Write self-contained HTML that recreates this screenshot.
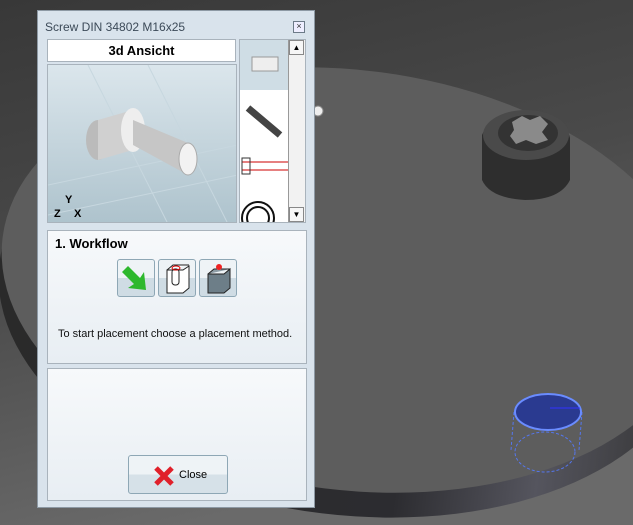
<!DOCTYPE html>
<html><head><style>
html,body{margin:0;width:633px;height:525px;overflow:hidden}
body{position:relative;font-family:"Liberation Sans",Tahoma,sans-serif;background:#3a3a3a}
.bg{position:absolute;left:0;top:0;display:block}
.dlg{position:absolute;left:37px;top:10px;width:278px;height:498px;background:#d9e3ec;border:1px solid #8d99a4;box-sizing:border-box}
.title{position:absolute;left:7px;top:9px;font-size:12px;color:#3c4a58}
.xbtn{position:absolute;left:255px;top:10px;width:10px;height:10px;border:1px solid #6c7a88;font-size:9px;line-height:9px;text-align:center;color:#333;background:#eef}
.hdr{position:absolute;left:9px;top:28px;width:189px;height:23px;background:#fff;border:1px solid #a9b3bc;box-sizing:border-box;font-weight:bold;font-size:13px;text-align:center;line-height:21px}
.img{position:absolute;left:9px;top:53px;width:190px;height:159px;background:linear-gradient(180deg,#dbe6ec,#aec3cd);border:1px solid #a9b3bc;box-sizing:border-box;overflow:hidden}
.thumbs{position:absolute;left:201px;top:28px;width:67px;height:184px;background:#fff;border:1px solid #a9b3bc;box-sizing:border-box;overflow:hidden}
.sb{position:absolute;right:0;top:0;width:16px;height:182px;background:#f2f2f2;border-left:1px solid #999}
.sbb{position:absolute;left:0;width:15px;height:15px;background:#f6f6f6;border:1px solid #888;box-sizing:border-box;font-size:8px;text-align:center;line-height:13px}
.pan{position:absolute;left:9px;width:260px;background:linear-gradient(180deg,#f7f9fb,#e8eef3);border:1px solid #a9b3bc;box-sizing:border-box}
.wf{font-weight:bold;font-size:13px;position:absolute;left:7px;top:5px}
.ib{position:absolute;top:28px;width:38px;height:38px;border:1px solid #8ea7b5;border-radius:3px;box-sizing:border-box;background:linear-gradient(180deg,#eef3f6 50%,#cfdce4 50%)}
.msg{position:absolute;left:10px;top:97px;font-size:11px;color:#111}
.close{position:absolute;left:80px;top:86px;width:100px;height:39px;border:1px solid #8ea7b5;border-radius:3px;box-sizing:border-box;background:linear-gradient(180deg,#eef3f6 50%,#d6e1e8 50%);font-size:11px}
</style></head><body>
<svg class="bg" width="633" height="525">
<defs>
<linearGradient id="fl" x1="0" y1="0" x2="0.3" y2="1"><stop offset="0" stop-color="#383838"/><stop offset="0.5" stop-color="#4a4a4a"/><stop offset="1" stop-color="#6a6a6a"/></linearGradient>
<linearGradient id="rim" x1="0" y1="0" x2="1" y2="0"><stop offset="0" stop-color="#2a2a2a"/><stop offset="0.6" stop-color="#2c2c30"/><stop offset="0.8" stop-color="#55555e"/><stop offset="1" stop-color="#333"/></linearGradient>
</defs>
<rect width="633" height="525" fill="url(#fl)"/>
<g transform="rotate(7 350 280)">
<ellipse cx="350" cy="305" rx="350" ry="210" fill="url(#rim)"/>
<ellipse cx="350" cy="280" rx="350" ry="210" fill="#5d5d5d"/>
</g>
<path d="M482 135 Q490 115 525 112 Q565 115 570 138 L570 180 Q560 200 525 200 Q490 198 482 180Z" fill="#2e2e2e"/>
<ellipse cx="526" cy="135" rx="43" ry="25" fill="#4a4a4a"/>
<ellipse cx="528" cy="133" rx="30" ry="18" fill="#333"/>
<path d="M512 122 l10 -6 8 4 10 -4 8 8 -6 8 6 8 -12 4 -10 -4 -10 4 -6 -8 4 -6z" fill="#8a8a8a"/>
<circle cx="318" cy="111" r="5" fill="#eee" stroke="#888"/>
<ellipse cx="545" cy="452" rx="30" ry="20" fill="none" stroke="#5577ee" stroke-width="1" stroke-dasharray="3 2"/>
<path d="M514 412 L511 450 M582 412 L579 450" stroke="#5577ee" stroke-width="1" stroke-dasharray="3 2"/>
<ellipse cx="548" cy="412" rx="33" ry="18" fill="#2a3a90" stroke="#6a8cff" stroke-width="2"/>
<path d="M550 408 H580" stroke="#33f" stroke-width="1"/>
</svg>
<div class="dlg">
<div class="title">Screw DIN 34802 M16x25</div>
<div class="xbtn">×</div>
<div class="hdr">3d Ansicht</div>
<div class="img"><svg width="190" height="159">
<path d="M0 120 L190 80 M0 150 L190 110 M40 0 L120 159 M100 0 L180 159" stroke="#c7d7df" stroke-width="1"/>
<ellipse cx="50" cy="75" rx="12" ry="20" fill="#bbb"/>
<path d="M50 55 L85 45 L85 85 L50 95Z" fill="#d0d0d0"/>
<ellipse cx="85" cy="65" rx="12" ry="22" fill="#eee"/>
<path d="M85 55 L140 78 L140 110 L85 80Z" fill="#c6c6c6"/>
<ellipse cx="140" cy="94" rx="9" ry="16" fill="#f2f2f2" stroke="#aaa"/>
<text x="17" y="138" font-size="11" font-weight="bold" font-family="Liberation Sans">Y</text>
<text x="6" y="152" font-size="11" font-weight="bold" font-family="Liberation Sans">Z</text>
<text x="26" y="152" font-size="11" font-weight="bold" font-family="Liberation Sans">X</text>
</svg></div>
<div class="thumbs">
<div style="position:absolute;left:0;top:0;width:50px;height:50px;background:#cfdde5"></div>
<svg style="position:absolute;left:0;top:0" width="50" height="184">
<rect x="12" y="17" width="26" height="14" fill="#eee" stroke="#999"/>
<path d="M8 68 L40 95" stroke="#444" stroke-width="7"/>
<path d="M2 122 H48 M2 130 H48" stroke="#c00" stroke-width="1"/><rect x="2" y="118" width="8" height="16" fill="none" stroke="#333"/>
<circle cx="18" cy="178" r="16" fill="none" stroke="#111" stroke-width="2"/><circle cx="18" cy="178" r="11" fill="none" stroke="#111" stroke-width="2"/>
</svg>
<div class="sb"><div class="sbb" style="top:0">▲</div><div class="sbb" style="top:167px">▼</div></div>
</div>
<div class="pan" style="top:219px;height:134px">
<div class="wf">1. Workflow</div>
<div class="ib" style="left:69px"><svg width="36" height="36"><path d="M10 6 L22 18 L26 12 L28 30 L10 28 L16 24 L4 12Z" fill="#2db82d"/></svg></div>
<div class="ib" style="left:110px"><svg width="36" height="36"><path d="M8 10 L24 10 L30 6 L30 28 L24 33 L8 33Z M8 10 L14 5 L30 5" fill="#fff" stroke="#222"/><rect x="13" y="9" width="7" height="16" rx="3" fill="none" stroke="#222"/><ellipse cx="17" cy="8" rx="4" ry="2" fill="none" stroke="#d00"/></svg></div>
<div class="ib" style="left:151px"><svg width="36" height="36"><path d="M8 14 L24 14 L30 9 L30 28 L24 33 L8 33Z" fill="#6d7e88" stroke="#222"/><path d="M8 14 L14 9 L30 9" fill="#8c9ba4" stroke="#222"/><circle cx="19" cy="7" r="3" fill="#e22"/></svg></div>
<div class="msg">To start placement choose a placement method.</div>
</div>
<div class="pan" style="top:357px;height:133px">
<div class="close"><svg style="position:absolute;left:24px;top:9px" width="22" height="22"><path d="M3 3 L19 19 M19 3 L3 19" stroke="#e0202a" stroke-width="5"/></svg><span style="position:absolute;left:50px;top:13px">Close</span></div>
</div>
</div>
</body></html>
